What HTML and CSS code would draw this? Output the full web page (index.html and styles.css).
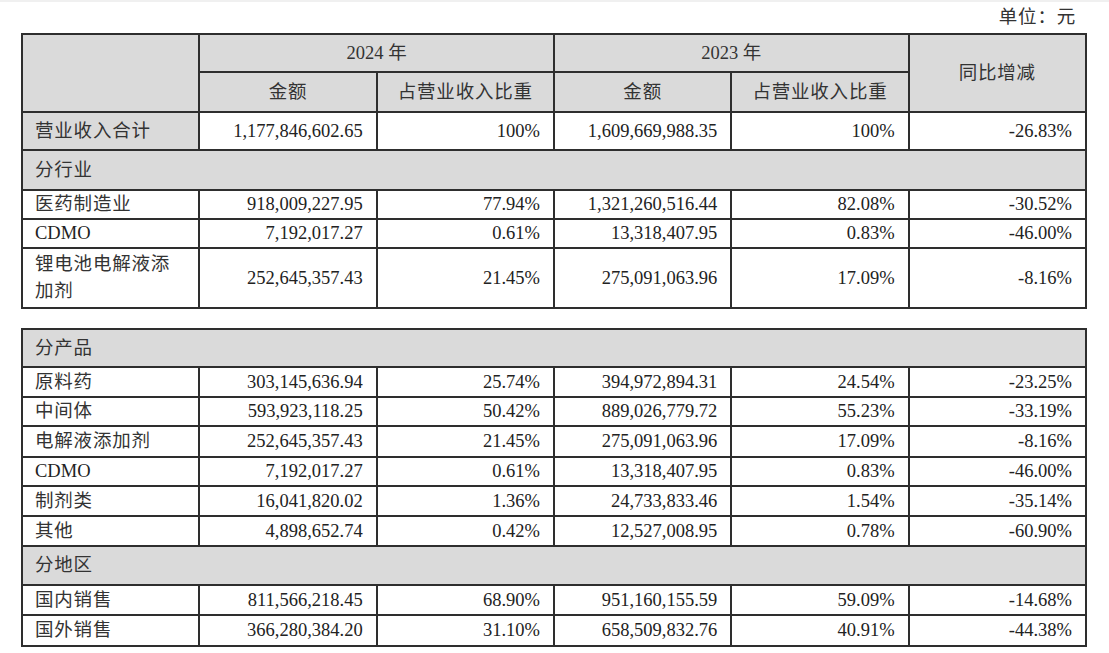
FILE: index.html
```html
<!DOCTYPE html>
<html lang="zh-CN">
<head>
<meta charset="utf-8">
<title>营业收入构成</title>
<link rel="stylesheet" href="styles.css">
</head>
<body>
<div class="page">
  <div class="unit">单位：元</div>
  <table class="tbl">
    <tr class="h38">
      <td class="hd" rowspan="2"></td>
      <td class="hd" colspan="2">2024 年</td>
      <td class="hd" colspan="2">2023 年</td>
      <td class="hd cn" rowspan="2">同比增减</td>
    </tr>
    <tr class="h40">
      <td class="hd cn">金额</td>
      <td class="hd cn">占营业收入比重</td>
      <td class="hd cn">金额</td>
      <td class="hd cn">占营业收入比重</td>
    </tr>
    <tr class="h38">
      <td class="lbl gray">营业收入合计</td>
      <td class="num">1,177,846,602.65</td>
      <td class="num">100%</td>
      <td class="num">1,609,669,988.35</td>
      <td class="num">100%</td>
      <td class="num">-26.83%</td>
    </tr>
    <tr class="h40">
      <td class="lbl gray" colspan="6">分行业</td>
    </tr>
    <tr class="h28">
      <td class="lbl">医药制造业</td>
      <td class="num">918,009,227.95</td>
      <td class="num">77.94%</td>
      <td class="num">1,321,260,516.44</td>
      <td class="num">82.08%</td>
      <td class="num">-30.52%</td>
    </tr>
    <tr class="h28">
      <td class="lbl lat">CDMO</td>
      <td class="num">7,192,017.27</td>
      <td class="num">0.61%</td>
      <td class="num">13,318,407.95</td>
      <td class="num">0.83%</td>
      <td class="num">-46.00%</td>
    </tr>
    <tr class="h60">
      <td class="lbl">锂电池电解液添<br>加剂</td>
      <td class="num">252,645,357.43</td>
      <td class="num">21.45%</td>
      <td class="num">275,091,063.96</td>
      <td class="num">17.09%</td>
      <td class="num">-8.16%</td>
    </tr>
  </table>

  <table class="tbl second">
    <tr class="h38">
      <td class="lbl gray" colspan="6">分产品</td>
    </tr>
    <tr class="h30">
      <td class="lbl">原料药</td>
      <td class="num">303,145,636.94</td>
      <td class="num">25.74%</td>
      <td class="num">394,972,894.31</td>
      <td class="num">24.54%</td>
      <td class="num">-23.25%</td>
    </tr>
    <tr class="h29">
      <td class="lbl">中间体</td>
      <td class="num">593,923,118.25</td>
      <td class="num">50.42%</td>
      <td class="num">889,026,779.72</td>
      <td class="num">55.23%</td>
      <td class="num">-33.19%</td>
    </tr>
    <tr class="h31">
      <td class="lbl">电解液添加剂</td>
      <td class="num">252,645,357.43</td>
      <td class="num">21.45%</td>
      <td class="num">275,091,063.96</td>
      <td class="num">17.09%</td>
      <td class="num">-8.16%</td>
    </tr>
    <tr class="h28">
      <td class="lbl lat">CDMO</td>
      <td class="num">7,192,017.27</td>
      <td class="num">0.61%</td>
      <td class="num">13,318,407.95</td>
      <td class="num">0.83%</td>
      <td class="num">-46.00%</td>
    </tr>
    <tr class="h30">
      <td class="lbl">制剂类</td>
      <td class="num">16,041,820.02</td>
      <td class="num">1.36%</td>
      <td class="num">24,733,833.46</td>
      <td class="num">1.54%</td>
      <td class="num">-35.14%</td>
    </tr>
    <tr class="h30">
      <td class="lbl">其他</td>
      <td class="num">4,898,652.74</td>
      <td class="num">0.42%</td>
      <td class="num">12,527,008.95</td>
      <td class="num">0.78%</td>
      <td class="num">-60.90%</td>
    </tr>
    <tr class="h39">
      <td class="lbl gray" colspan="6">分地区</td>
    </tr>
    <tr class="h30">
      <td class="lbl">国内销售</td>
      <td class="num">811,566,218.45</td>
      <td class="num">68.90%</td>
      <td class="num">951,160,155.59</td>
      <td class="num">59.09%</td>
      <td class="num">-14.68%</td>
    </tr>
    <tr class="h31">
      <td class="lbl">国外销售</td>
      <td class="num">366,280,384.20</td>
      <td class="num">31.10%</td>
      <td class="num">658,509,832.76</td>
      <td class="num">40.91%</td>
      <td class="num">-44.38%</td>
    </tr>
  </table>
</div>
</body>
</html>
```

FILE: styles.css
```css
html, body {
  margin: 0;
  padding: 0;
  background: #ffffff;
}

body {
  border-top: 2px solid #f0f0f0;
  font-family: "Liberation Serif", "Noto Sans CJK SC", serif;
  font-size: 18.5px;
  color: #222222;
}

.page {
  padding-left: 21px;
}

.unit {
  width: 1066px;
  box-sizing: border-box;
  height: 31px;
  padding-right: 11px;
  text-align: right;
  line-height: 31px;
  letter-spacing: 0.8px;
  color: #333333;
}

.tbl {
  width: 1066px;
  table-layout: fixed;
  border-collapse: separate;
  border-spacing: 0;
  border-top: 2px solid #2e2e2e;
  border-left: 2px solid #2e2e2e;
}

.tbl.second {
  margin-top: 19px;
}

.tbl td {
  border-right: 2px solid #2e2e2e;
  border-bottom: 2px solid #2e2e2e;
  padding: 0 12px;
  line-height: 27px;
  vertical-align: middle;
  white-space: nowrap;
  background: #ffffff;
}

.tbl td.hd {
  background: #dadada;
  text-align: center;
  color: #333333;
}

.tbl td.cn {
  letter-spacing: 0.8px;
}

.tbl td.lbl {
  text-align: left;
  color: #333333;
  letter-spacing: 0.8px;
}

.tbl td.lbl.lat {
  letter-spacing: 0;
  color: #222222;
}

.tbl td.gray {
  background: #dadada;
}

.tbl td.num {
  text-align: right;
  padding-right: 13px;
}

.h28 { height: 28px; }
.h29 { height: 29px; }
.h30 { height: 30px; }
.h31 { height: 31px; }
.h38 { height: 38px; }
.h39 { height: 39px; }
.h40 { height: 40px; }
.h60 { height: 60px; }
```
